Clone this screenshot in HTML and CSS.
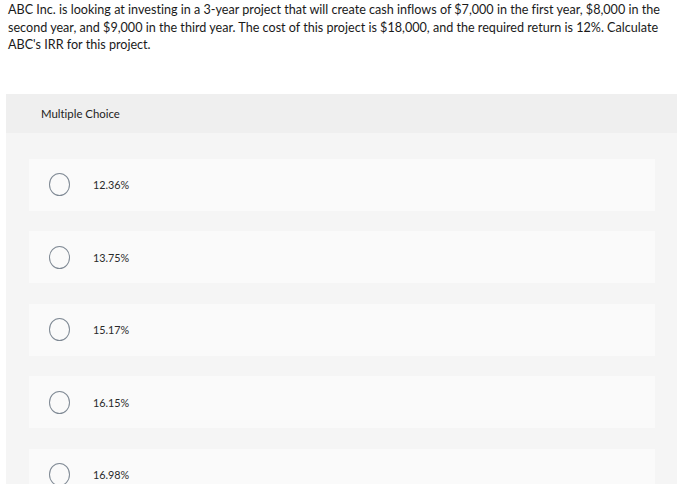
FILE: index.html
```html
<!DOCTYPE html>
<html>
<head>
<meta charset="utf-8">
<link rel="stylesheet" href="styles.css">
</head>
<body>
<div class="question">ABC Inc. is looking at investing in a 3-year project that will create cash inflows of $7,000 in the first year, $8,000 in the second year, and $9,000 in the third year. The cost of this project is $18,000, and the required return is 12%. Calculate ABC's IRR for this project.</div>
<div class="panel">
  <div class="panel-head">Multiple Choice</div>
  <div class="options">
    <div class="option"><span class="radio"></span><span class="label">12.36%</span></div>
    <div class="option"><span class="radio"></span><span class="label">13.75%</span></div>
    <div class="option"><span class="radio"></span><span class="label">15.17%</span></div>
    <div class="option"><span class="radio"></span><span class="label">16.15%</span></div>
    <div class="option"><span class="radio"></span><span class="label">16.98%</span></div>
  </div>
</div>
</body>
</html>
```
FILE: styles.css
```css
html, body {
  margin: 0;
  padding: 0;
  background: #ffffff;
}
body {
  font-family: Lato, "Liberation Sans", sans-serif;
  color: #1f1f1f;
  font-variant-ligatures: none;
}
.question {
  width: 662px;
  padding-left: 8px;
  font-size: 12.6px;
  line-height: 17.5px;
  margin-top: 1px;
  color: #1a1a1a;
}
.panel {
  margin: 40px 0 0 6px;
  width: 671px;
  height: 390px;
  overflow: hidden;
  background: #f5f5f5;
}
.panel-head {
  height: 39px;
  background: #efefef;
  display: flex;
  align-items: center;
  padding-left: 35px;
  font-size: 11.4px;
  color: #222;
}
.options {
  padding: 26px 22px 0 23px;
  display: flex;
  flex-direction: column;
  gap: 20.5px;
}
.option {
  height: 52px;
  background: #fafafa;
  display: flex;
  align-items: center;
  flex-shrink: 0;
}
.radio {
  width: 19px;
  height: 21px;
  border: 1.3px solid #7f8994;
  border-radius: 50%;
  margin-left: 20px;
  box-sizing: content-box;
}
.label {
  margin-left: 23px;
  font-size: 10.8px;
  color: #2a2a2a;
}
```
